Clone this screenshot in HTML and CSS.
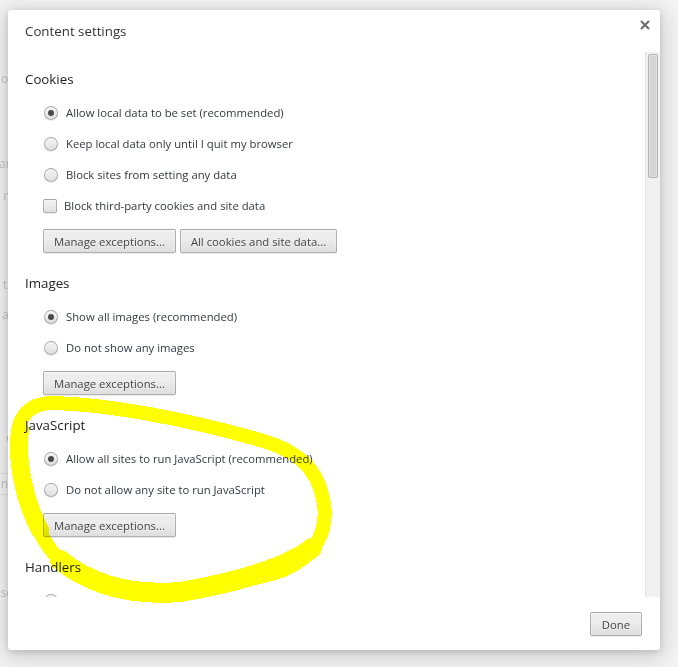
FILE: index.html
```html
<!DOCTYPE html>
<html lang="en">
<head>
    <meta charset="UTF-8">
    <title>Content settings</title>
    <link rel="stylesheet" href="styles.css">
</head>
<body>

    <!-- settings page behind the overlay, only its left edge shows -->
    <div class="page">
      <div class="page-edge">
        <span class="frag frag-1">or</span>
        <span class="frag frag-2">an</span>
        <span class="frag frag-3">rr</span>
        <span class="frag frag-4">ts</span>
        <span class="frag frag-5">at</span>
        <span class="frag frag-6 frag-link">e</span>
        <span class="frag frag-7 frag-box">n</span>
        <span class="frag frag-8">se</span>
      </div>
    </div>

    <div class="overlay">
      <div class="dialog">
        <div class="dialog-header">
          <h1 class="dialog-title">Content settings</h1>
          <button class="close" aria-label="Close">
            <svg width="10" height="10" viewBox="0 0 10 10">
              <path d="M1 1 L9 9 M9 1 L1 9" stroke="#6f6f6f" stroke-width="2.2" />
            </svg>
          </button>
        </div>

        <div class="dialog-body">
          <div class="scroll">

            <section class="group">
              <h3>Cookies</h3>
              <div class="options">
                <label class="option"><span class="radio checked"></span>Allow local data to be set (recommended)</label>
                <label class="option"><span class="radio"></span>Keep local data only until I quit my browser</label>
                <label class="option"><span class="radio"></span>Block sites from setting any data</label>
                <label class="option option-check"><span class="check"></span>Block third-party cookies and site data</label>
              </div>
              <div class="actions">
                <button class="btn">Manage exceptions...</button>
                <button class="btn">All cookies and site data...</button>
              </div>
            </section>

            <section class="group">
              <h3>Images</h3>
              <div class="options">
                <label class="option"><span class="radio checked"></span>Show all images (recommended)</label>
                <label class="option"><span class="radio"></span>Do not show any images</label>
              </div>
              <div class="actions">
                <button class="btn">Manage exceptions...</button>
              </div>
            </section>

            <section class="group">
              <h3>JavaScript</h3>
              <div class="options">
                <label class="option"><span class="radio checked"></span>Allow all sites to run JavaScript (recommended)</label>
                <label class="option"><span class="radio"></span>Do not allow any site to run JavaScript</label>
              </div>
              <div class="actions">
                <button class="btn">Manage exceptions...</button>
              </div>
            </section>

            <section class="group">
              <h3>Handlers</h3>
              <div class="options">
                <!-- first handler option, scrolled out of view below -->
                <div class="option"><span class="radio"></span></div>
              </div>
            </section>

          </div>
          <div class="scrollbar">
            <div class="thumb"></div>
          </div>
        </div>

        <div class="dialog-footer">
          <button class="btn">Done</button>
        </div>
      </div>
    </div>

    <!-- hand drawn highlight -->
    <svg class="annotation" width="678" height="667" viewBox="0 0 678 667">
      <path d="M18 452 C15 426, 21 405, 50 403 C110 404, 190 420, 260 440 C299 451, 317 469, 323 499 C330 531, 315 560, 275 573 C230 585, 180 594, 150 591 C105 587, 75 575, 55 555 C38 535, 26 505, 21 478 Z"
            fill="none" stroke="#ffff00" stroke-width="14" stroke-linejoin="round" shape-rendering="crispEdges" />
      <path d="M312 548 C290 566, 240 582, 180 592 C130 596, 90 584, 60 560"
            fill="none" stroke="#ffff00" stroke-width="20" stroke-linecap="round" shape-rendering="crispEdges" />
      <path d="M20 430 C16 460, 24 500, 40 530"
            fill="none" stroke="#ffff00" stroke-width="18" stroke-linecap="round" shape-rendering="crispEdges" />
    </svg>

</body>
</html>
```

FILE: styles.css
```css
:root {
  --text: #303942;
  --ui-font: "Open Sans", "Liberation Sans", Arial, sans-serif;
}

* {
  box-sizing: border-box;
}

body {
  margin: 0;
  height: 667px;
  overflow: hidden;
  background: #f5f5f5;
  font-family: var(--ui-font);
  font-size: 11.3px;
  color: var(--text);
}

/* page behind */

.page {
  height: 100%;
}

.page-edge {
  width: 13px;
  display: flex;
  flex-direction: column;
  align-items: flex-end;
  color: #c4c4c4;
  font-size: 12px;
  line-height: 16px;
}

.frag {
  white-space: nowrap;
}

.frag-1 { margin-top: 71px; }
.frag-2 { margin-top: 69px; }
.frag-3 { margin-top: 16px; }
.frag-4 { margin-top: 73px; }
.frag-5 { margin-top: 14px; }
.frag-6 { margin-top: 107px; }
.frag-7 { margin-top: 27px; }
.frag-8 { margin-top: 90px; }

.frag-link {
  color: #b5c4e6;
}

.frag-box {
  border: 1px solid #dedede;
  border-left: 0;
  padding: 2px 4px 2px 0;
  line-height: 16px;
}

/* dialog */

.overlay {
  position: absolute;
  inset: 0;
  padding: 10px 18px 17px 8px;
}

.dialog {
  height: 100%;
  display: flex;
  flex-direction: column;
  background: #fff;
  border-radius: 3px;
  box-shadow: 0 4px 23px 5px rgba(0, 0, 0, 0.15), 0 2px 6px rgba(0, 0, 0, 0.15);
  overflow: hidden;
}

.dialog-header {
  height: 42px;
  flex: 0 0 42px;
  display: flex;
  justify-content: space-between;
  align-items: flex-start;
  padding: 11px 9px 0 17px;
}

.dialog-title {
  margin: 0;
  font-size: 13.3px;
  font-weight: normal;
  line-height: 20px;
  color: #333;
}

.close {
  margin-top: -2px;
  padding: 0;
  border: 0;
  background: none;
  width: 12px;
  height: 12px;
  display: flex;
  align-items: center;
  justify-content: center;
}

.dialog-body {
  flex: 1;
  display: flex;
  min-height: 0;
}

.scroll {
  flex: 1;
  overflow: hidden;
  padding: 17px 0 0 17px;
}

.scrollbar {
  flex: 0 0 15px;
  background: #f1f1f1;
  border-left: 1px solid #e3e3e3;
  padding: 2px 2px 0 2px;
}

.thumb {
  height: 124px;
  background: #d6d6d6;
  border: 1px solid #b4b4b4;
  border-radius: 2px;
  box-shadow: inset 0 0 0 1px #e2e2e2;
}

.dialog-footer {
  flex: 0 0 53px;
  display: flex;
  justify-content: flex-end;
  padding: 15px 18px 0 0;
}

/* sections */

.group h3 {
  margin: 0;
  font-size: 13.3px;
  font-weight: normal;
  line-height: 20px;
  color: #222;
}

.group + .group {
  margin-top: 20px;
}

.options {
  margin-top: 8px;
  padding-left: 19px;
}

.option {
  display: flex;
  align-items: center;
  height: 31px;
  gap: 8px;
}

.option-check {
  gap: 7px;
  margin-left: -1px;
}

.radio {
  width: 14px;
  height: 14px;
  border-radius: 50%;
  border: 1px solid rgba(0, 0, 0, 0.25);
  background: linear-gradient(#ededed, #ededed 38%, #dedede);
  box-shadow: 0 1px 0 rgba(0, 0, 0, 0.08), inset 0 1px 2px rgba(255, 255, 255, 0.75);
  display: flex;
  align-items: center;
  justify-content: center;
}

.radio.checked::after {
  content: "";
  width: 6px;
  height: 6px;
  border-radius: 50%;
  background: #4a4a4a;
}

.check {
  width: 14px;
  height: 14px;
  border-radius: 2px;
  border: 1px solid rgba(0, 0, 0, 0.25);
  background: linear-gradient(#ededed, #ededed 38%, #dedede);
  box-shadow: 0 1px 0 rgba(0, 0, 0, 0.08), inset 0 1px 2px rgba(255, 255, 255, 0.75);
}

.actions {
  display: flex;
  gap: 4px;
  margin-top: 8px;
  padding-left: 18px;
}

.btn {
  height: 24px;
  padding: 0 10px;
  border: 1px solid rgba(0, 0, 0, 0.25);
  border-radius: 2px;
  background: linear-gradient(#ededed, #ededed 38%, #dedede);
  box-shadow: 0 1px 0 rgba(0, 0, 0, 0.08), inset 0 1px 2px rgba(255, 255, 255, 0.75);
  font-family: var(--ui-font);
  font-size: 11.3px;
  color: #444;
  text-shadow: 0 1px 0 #f0f0f0;
}

.dialog-footer .btn {
  padding: 0 11px;
}

/* highlight, drawn as a marker under the text */

.annotation {
  position: absolute;
  left: 0;
  top: 0;
  pointer-events: none;
  mix-blend-mode: multiply;
}
```
